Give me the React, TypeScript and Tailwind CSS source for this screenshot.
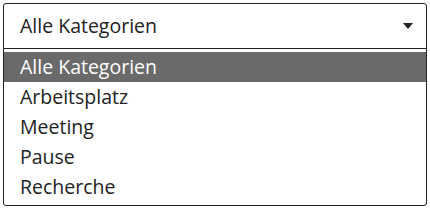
export default function App() {
  const options = ["Alle Kategorien", "Arbeitsplatz", "Meeting", "Pause", "Recherche"];
  return (
    <div className="w-[430px] h-[210px] bg-white p-[3px]" style={{ fontFamily: '"Open Sans", sans-serif' }}>
      <div className="w-[424px] h-[203px] border border-[#222] rounded-[3px] flex flex-col text-[#222]">
        <div className="h-[45px] flex items-center justify-between pl-4 pr-[13px] border-b border-[#222] text-[19.5px]">
          <span>Alle Kategorien</span>
          <svg width="10" height="6" viewBox="0 0 10 6"><path d="M0 0h10L5 6z" fill="#222" /></svg>
        </div>
        <div className="pt-[3px] flex flex-col">
          {options.map((o, i) => (
            <div
              key={o}
              className={`h-[30px] flex items-center pl-4 text-[19.5px] ${i === 0 ? "bg-[#6a6a6a] text-white" : ""}`}
            >
              {o}
            </div>
          ))}
        </div>
      </div>
    </div>
  );
}
